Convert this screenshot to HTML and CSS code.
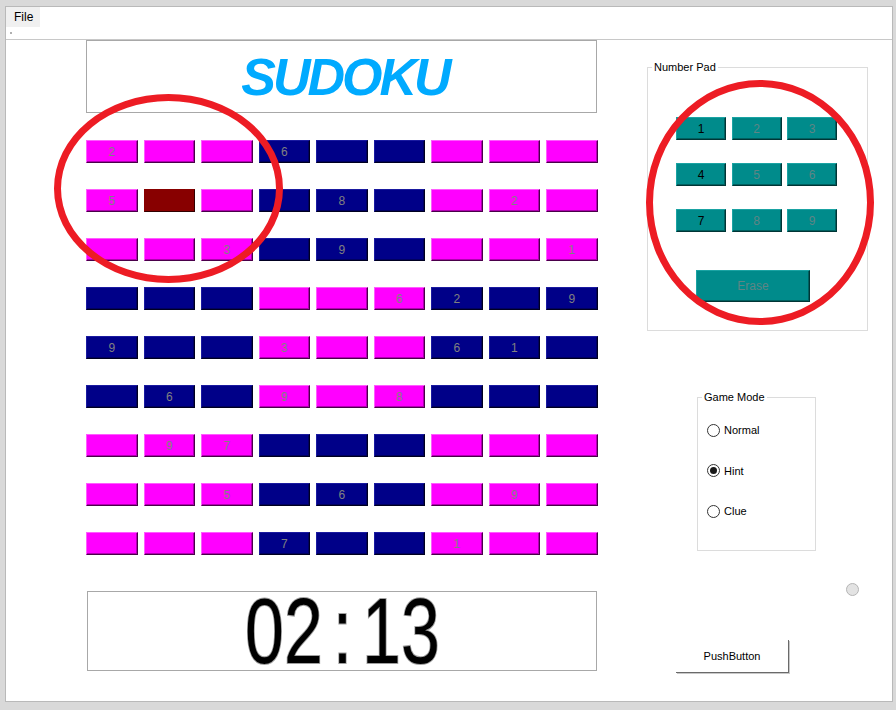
FILE: index.html
```html
<!DOCTYPE html>
<html lang="en">
<head>
<meta charset="utf-8">
<title>Sudoku</title>
<link rel="stylesheet" href="styles.css">
</head>
<body>
<div class="window">
  <div class="menubar">
    <span class="menu-item">File</span>
    <span class="menu-dot"></span>
  </div>
  <div class="content">
    <div class="left">
      <div class="title-box"><span class="title">SUDOKU</span></div>
      <div class="grid">
        <div class="c m">2</div><div class="c m"></div><div class="c m"></div><div class="c n">6</div><div class="c n"></div><div class="c n"></div><div class="c m"></div><div class="c m"></div><div class="c m"></div>
        <div class="c m">5</div><div class="c r"></div><div class="c m"></div><div class="c n"></div><div class="c n">8</div><div class="c n"></div><div class="c m"></div><div class="c m">2</div><div class="c m"></div>
        <div class="c m"></div><div class="c m"></div><div class="c m">3</div><div class="c n"></div><div class="c n">9</div><div class="c n"></div><div class="c m"></div><div class="c m"></div><div class="c m">1</div>
        <div class="c n"></div><div class="c n"></div><div class="c n"></div><div class="c m"></div><div class="c m"></div><div class="c m">6</div><div class="c n">2</div><div class="c n"></div><div class="c n">9</div>
        <div class="c n">9</div><div class="c n"></div><div class="c n"></div><div class="c m">3</div><div class="c m"></div><div class="c m"></div><div class="c n">6</div><div class="c n">1</div><div class="c n"></div>
        <div class="c n"></div><div class="c n">6</div><div class="c n"></div><div class="c m">9</div><div class="c m"></div><div class="c m">8</div><div class="c n"></div><div class="c n"></div><div class="c n"></div>
        <div class="c m"></div><div class="c m">9</div><div class="c m">7</div><div class="c n"></div><div class="c n"></div><div class="c n"></div><div class="c m"></div><div class="c m"></div><div class="c m"></div>
        <div class="c m"></div><div class="c m"></div><div class="c m">5</div><div class="c n"></div><div class="c n">6</div><div class="c n"></div><div class="c m"></div><div class="c m">9</div><div class="c m"></div>
        <div class="c m"></div><div class="c m"></div><div class="c m"></div><div class="c n">7</div><div class="c n"></div><div class="c n"></div><div class="c m">1</div><div class="c m"></div><div class="c m"></div>
      </div>
      <div class="timer"><span class="lcd"><span class="ch">0</span><span class="ch">2</span><span class="ch">:</span><span class="ch">1</span><span class="ch">3</span></span></div>
    </div>
    <div class="right">
      <fieldset class="group numpad">
        <legend>Number Pad</legend>
        <div class="numpad-body">
          <div class="keys">
            <div class="key on">1</div><div class="key">2</div><div class="key">3</div>
            <div class="key on">4</div><div class="key">5</div><div class="key">6</div>
            <div class="key on">7</div><div class="key">8</div><div class="key">9</div>
          </div>
          <div class="key erase">Erase</div>
        </div>
      </fieldset>
      <fieldset class="group mode">
        <legend>Game Mode</legend>
        <div class="radios">
          <div class="radio"><span class="dot"></span><span>Normal</span></div>
          <div class="radio"><span class="dot checked"></span><span>Hint</span></div>
          <div class="radio"><span class="dot"></span><span>Clue</span></div>
        </div>
      </fieldset>
      <div class="led"></div>
      <div class="push">PushButton</div>
    </div>
  </div>
  <div class="ring ring-a"></div>
  <div class="ring ring-b"></div>
</div>
</body>
</html>
```

FILE: styles.css
```css
* { box-sizing: border-box; }
html, body { margin: 0; padding: 0; }
body {
  background: #d9d9d9;
  width: 896px;
  height: 710px;
  overflow: hidden;
  font-family: "Liberation Sans", Arial, sans-serif;
  color: #000;
}
.window {
  position: relative;
  margin: 6px 0 0 5px;
  width: 888px;
  height: 696px;
  border: 1px solid #b9b9b9;
  background: #fff;
}
.menubar {
  height: 33px;
  border-bottom: 1px solid #c8c8c8;
  display: flex;
  flex-direction: column;
  align-items: flex-start;
}
.menu-item {
  width: 34px;
  height: 20px;
  padding-left: 8px;
  background: #f0f0f0;
  font-size: 12px;
  line-height: 21px;
}
.menu-dot {
  width: 2px;
  height: 2px;
  background: #b0b0b0;
  margin: 5px 0 0 4px;
}
.content { display: flex; align-items: flex-start; }
.left {
  margin-left: 80px;
  width: 511px;
  display: flex;
  flex-direction: column;
}
.title-box {
  height: 73px;
  border: 1px solid #a8a8a8;
  display: flex;
  align-items: center;
  justify-content: center;
  padding-left: 7px;
}
.title {
  font-weight: bold;
  font-style: italic;
  font-size: 52px;
  letter-spacing: -3px;
  color: #00aaff;
}
.grid {
  margin-top: 27px;
  display: grid;
  grid-template-columns: repeat(9, 51.5px);
  grid-auto-rows: 23px;
  column-gap: 6px;
  row-gap: 26px;
}
.c {
  display: flex;
  align-items: center;
  justify-content: center;
  font-size: 12px;
  color: #808080;
  border: 1px solid;
}
.m {
  background: #ff00ff;
  border-color: #ff5cff #4a004a #4a004a #ff5cff;
  box-shadow: inset -1px -1px 0 #b000b0;
}
.n {
  background: #000088;
  border-color: #1a1aa0 #000020 #000020 #1a1aa0;
  box-shadow: inset -1px -1px 0 #000060;
}
.r {
  background: #880000;
  border-color: #880000 #300000 #300000 #880000;
}
.timer {
  margin: 36px 0 0 1px;
  height: 80px;
  border: 1px solid #a8a8a8;
  display: flex;
  align-items: center;
  justify-content: center;
}
.lcd {
  display: flex;
  font-size: 92px;
  line-height: 78px;
  color: #000;
}
.ch {
  display: inline-flex;
  justify-content: center;
  width: 39px;
  transform: scaleX(0.76);
  -webkit-text-stroke: 2px #a0a0a0;
  paint-order: stroke fill;
}
.right {
  display: flex;
  flex-direction: column;
  align-items: flex-start;
}
.group {
  margin: 0;
  padding: 0;
  border: 1px solid #dcdcdc;
  min-width: 0;
}
.group legend {
  margin-left: 4px;
  padding: 0 2px;
  font-size: 11px;
  line-height: 13px;
}
.numpad {
  margin: 21px 0 0 50px;
  width: 221px;
}
.numpad-body {
  padding: 43px 0 28px 28px;
}
.keys {
  display: grid;
  grid-template-columns: repeat(3, 50px);
  grid-auto-rows: 23px;
  column-gap: 5.5px;
  row-gap: 23px;
}
.key {
  border: 1px solid;
  border-color: #1aa3a3 #003535 #003535 #1aa3a3;
  background: #008b8b;
  box-shadow: inset -1px -1px 0 #006060;
  font-size: 12px;
  color: #5f8585;
  display: flex;
  align-items: center;
  justify-content: center;
}
.key.on { color: #000; }
.erase {
  margin: 38px 0 0 20px;
  width: 114px;
  height: 32px;
}
.mode {
  margin: 60px 0 0 100px;
  width: 119px;
}
.radios {
  display: flex;
  flex-direction: column;
  gap: 24.5px;
  padding: 18px 0 31px 9px;
}
.radio {
  display: flex;
  align-items: center;
  height: 16px;
  font-size: 11px;
  gap: 4px;
}
.dot {
  width: 13px;
  height: 13px;
  border: 1px solid #333;
  border-radius: 50%;
  background: #fff;
  display: flex;
  align-items: center;
  justify-content: center;
}
.dot.checked::after {
  content: "";
  width: 7px;
  height: 7px;
  border-radius: 50%;
  background: #1a1a1a;
}
.led {
  margin: 32px 0 0 249px;
  width: 13px;
  height: 13px;
  border-radius: 50%;
  background: #e3e3e3;
  border: 1px solid #b5b5b5;
}
.push {
  margin: 44px 0 0 79px;
  width: 113px;
  height: 33px;
  background: #fff;
  border-right: 1px solid #6a6a6a;
  border-bottom: 1px solid #6a6a6a;
  box-shadow: 1px 1px 0 #c8c8c8;
  font-size: 11px;
  display: flex;
  align-items: center;
  justify-content: center;
}
.ring {
  position: absolute;
  border: 7px solid #ed1c24;
  border-radius: 50%;
}
.ring-a { left: 48px; top: 87px; width: 229px; height: 189px; }
.ring-b { left: 640px; top: 73px; width: 228px; height: 245px; }
```
